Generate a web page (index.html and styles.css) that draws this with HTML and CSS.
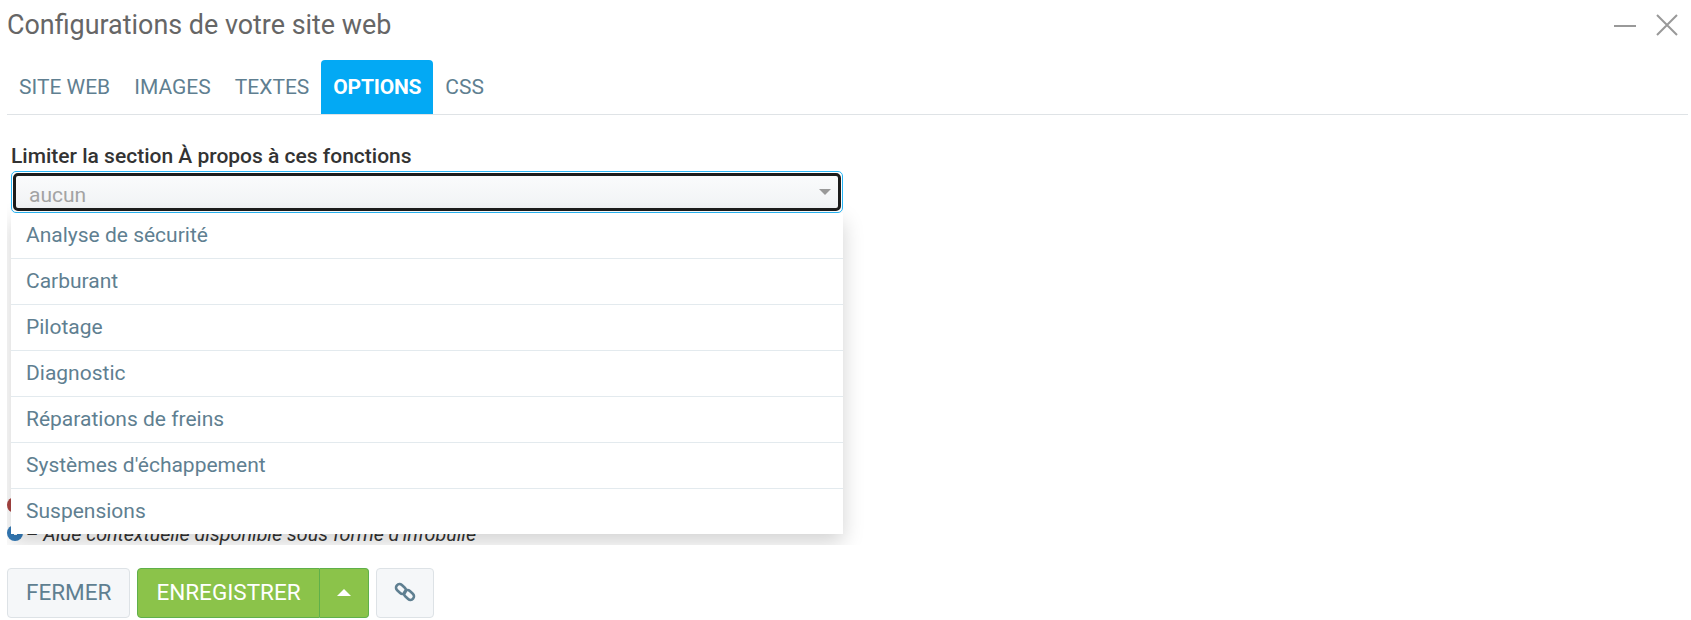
FILE: index.html
```html
<!DOCTYPE html>
<html lang="fr">
<head>
  <meta charset="UTF-8" />
  <meta name="viewport" content="width=device-width, initial-scale=1.0" />
  <title>Configurations de votre site web</title>
  <link rel="stylesheet" href="styles.css">
</head>
<body>
  <div class="dialog">
    <div class="dialog-head">
      <h1>Configurations de votre site web</h1>
      <div class="window-btns">
        <svg width="22" height="22" viewBox="0 0 22 22"><path d="M0 12H22" stroke="#999" stroke-width="2"/></svg>
        <svg width="22" height="22" viewBox="0 0 22 22"><path d="M1 1L21 21M21 1L1 21" stroke="#999" stroke-width="2"/></svg>
      </div>
    </div>

    <div class="tabs">
      <a class="tab">SITE WEB</a>
      <a class="tab">IMAGES</a>
      <a class="tab">TEXTES</a>
      <a class="tab active">OPTIONS</a>
      <a class="tab">CSS</a>
    </div>

    <div class="tab-body">
      <label class="field-label">Limiter la section À propos à ces fonctions</label>
      <div class="select-wrap">
        <div class="select-ring">
          <div class="select-box">
            <span>aucun</span>
            <i class="caret"></i>
          </div>
        </div>
        <ul class="options">
          <li>Analyse de sécurité</li>
          <li>Carburant</li>
          <li>Pilotage</li>
          <li>Diagnostic</li>
          <li>Réparations de freins</li>
          <li>Systèmes d'échappement</li>
          <li>Suspensions</li>
        </ul>
      </div>
      <div class="legend">
        <p><i class="dot red"></i> – Champ obligatoire</p>
        <p><i class="dot blue"></i> – Aide contextuelle disponible sous forme d'infobulle</p>
      </div>
    </div>

    <div class="actions">
      <button class="btn">FERMER</button>
      <div class="btn-group">
        <button class="btn green">ENREGISTRER</button>
        <button class="btn green arrow"><i class="caret-up"></i></button>
      </div>
      <button class="btn link-btn">
        <svg width="24" height="24" viewBox="0 0 24 24" fill="none" stroke="#5f7f91" stroke-width="2.6"><rect x="2.5" y="5.5" width="11" height="7" rx="3.5" transform="rotate(42 8 9)"/><rect x="10.5" y="11.5" width="11" height="7" rx="3.5" transform="rotate(42 16 15)"/></svg>
      </button>
    </div>
  </div>
</body>
</html>
```

FILE: styles.css
```css
* {
  box-sizing: border-box;
}

body {
  margin: 0;
  background-color: #fff;
  font-family: Roboto, "Liberation Sans", sans-serif;
}

.dialog {
  padding: 0 3px 0 7px;
  height: 620px;
  overflow: hidden;
}

.dialog-head {
  display: flex;
  justify-content: space-between;
  align-items: center;
  height: 50px;
}

.dialog-head h1 {
  margin: 0;
  font-size: 26.9px;
  font-weight: 400;
  color: #666;
}

.window-btns {
  display: flex;
  gap: 20px;
  padding-right: 10px;
}

.tabs {
  display: flex;
  align-items: flex-end;
  height: 65px;
  border-bottom: 1px solid #dfe3e6;
}

.tab {
  padding: 0 12px;
  height: 54px;
  line-height: 54px;
  font-size: 21px;
  color: #5f7f91;
}

.tab.active {
  background-color: #03a9f4;
  color: #fff;
  font-weight: 700;
  letter-spacing: -0.2px;
  border-radius: 4px 4px 0 0;
}

.tab-body {
  height: 430px;
  overflow: hidden;
  padding: 28px 0 0 4px;
}

.field-label {
  display: block;
  font-size: 21px;
  font-weight: 500;
  color: #333;
  height: 28px;
  line-height: 26px;
}

.select-wrap {
  position: relative;
  width: 832px;
}

.select-ring {
  height: 42px;
  padding: 1px;
  border: 1px solid #29b6f6;
  border-radius: 5px;
  background-color: #fff;
}

.select-box {
  display: flex;
  justify-content: space-between;
  align-items: center;
  height: 100%;
  padding: 6px 7px 0 13px;
  border: 3px solid #1c1c1c;
  border-radius: 5px;
  background: linear-gradient(#fafbfc, #f1f3f5);
  font-size: 21px;
  color: #a3a3a3;
}

.caret {
  margin-top: -6px;
  border-left: 6px solid transparent;
  border-right: 6px solid transparent;
  border-top: 6px solid #999;
}

.options {
  position: absolute;
  top: 42px;
  left: 0;
  width: 100%;
  margin: 0;
  padding: 0;
  list-style: none;
  background-color: #fff;
  box-shadow: 0 8px 20px rgba(0, 0, 0, 0.18);
  z-index: 2;
}

.options li {
  height: 46px;
  line-height: 45px;
  padding-left: 15px;
  font-size: 21px;
  color: #5f7f91;
  border-bottom: 1px solid #e3eaee;
}

.options li:last-child {
  border-bottom: none;
  height: 45px;
}

.legend {
  margin: 280px 0 0 -4px;
  font-size: 19.7px;
  font-style: italic;
  color: #333;
}

.legend p {
  margin: 0;
  height: 28px;
  line-height: 28px;
  white-space: nowrap;
}

.dot {
  display: inline-block;
  width: 16px;
  height: 16px;
  margin-right: -2px;
  border-radius: 50%;
  vertical-align: 0;
}

.dot.red {
  background-color: #a94442;
}

.dot.blue {
  background: linear-gradient(#fff, #fff) center 1px / 3px 9px no-repeat #337ab7;
}

.actions {
  display: flex;
  gap: 7px;
  margin-top: 23px;
}

.btn {
  height: 50px;
  padding: 0 18px 2px;
  border: 1px solid #dde2e6;
  border-radius: 4px;
  background-color: #f5f7f9;
  font-family: inherit;
  font-size: 22.5px;
  color: #5f7f91;
}

.btn-group {
  display: flex;
}

.btn.green {
  background-color: #8bc34a;
  border-color: #5fb04a;
  color: #fff;
  border-radius: 4px 0 0 4px;
}

.btn.arrow {
  width: 49px;
  padding: 0;
  border-left: 0;
  border-radius: 0 4px 4px 0;
}

.caret-up {
  display: block;
  margin: 0 auto 2px;
  width: 14px;
  border-left: 7px solid transparent;
  border-right: 7px solid transparent;
  border-bottom: 7px solid #fff;
}

.link-btn {
  width: 58px;
  padding: 0 0 2px;
}

.link-btn svg {
  display: block;
  margin: 0 auto;
}
```
